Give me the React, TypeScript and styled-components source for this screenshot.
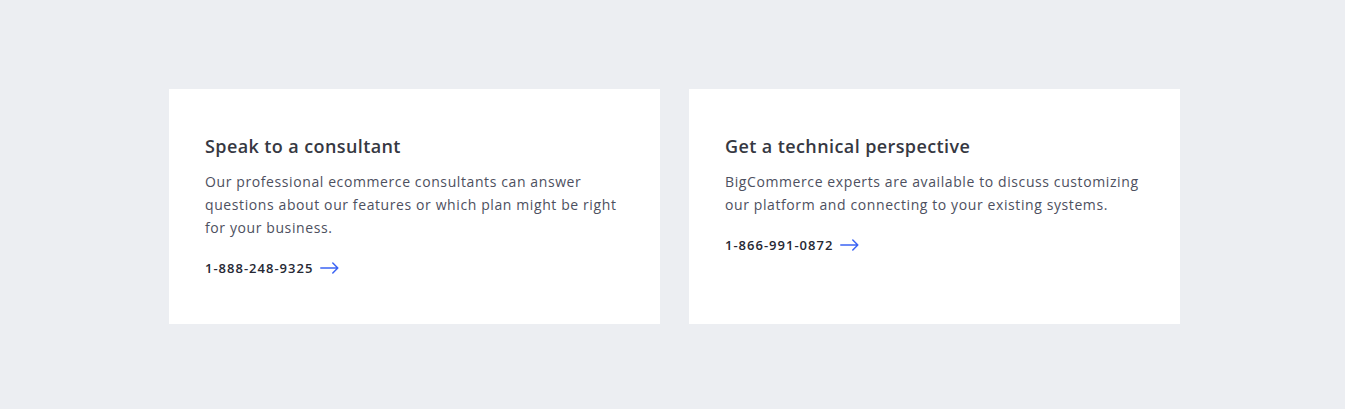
import React from "react";
import styled, { createGlobalStyle } from "styled-components";

const Global = createGlobalStyle`
  html, body { margin: 0; padding: 0; background: #eceef2; }
  body { font-family: "Open Sans", "Liberation Sans", sans-serif; }
`;

const Page = styled.div`
  width: 1345px;
  height: 409px;
  box-sizing: border-box;
  padding: 89px 0 0 169px;
  display: grid;
  grid-template-columns: 491px 491px;
  column-gap: 29px;
  align-items: start;
  background: #eceef2;
`;

const Card = styled.section`
  background: #ffffff;
  height: 235px;
  box-sizing: border-box;
  padding: 45px 36px 0 36px;
  display: flex;
  flex-direction: column;
`;

const Title = styled.h2`
  margin: 0;
  font-size: 18px;
  line-height: 24px;
  font-weight: 600;
  color: #363842;
  letter-spacing: 0.4px;
`;

const Body = styled.p`
  margin: 12px 0 0 0;
  font-size: 14px;
  line-height: 23px;
  font-weight: 400;
  color: #4d5060;
  letter-spacing: 0.6px;
`;

const Phone = styled.a`
  margin-top: 19px;
  display: inline-flex;
  align-items: center;
  gap: 7px;
  font-size: 13px;
  line-height: 20px;
  font-weight: 600;
  color: #262834;
  text-decoration: none;
  letter-spacing: 1px;
  align-self: flex-start;
`;

const Arrow = () => (
  <svg width="19" height="12" viewBox="0 0 19 12" fill="none">
    <path d="M0.8 6H17.8M12.8 1L17.8 6L12.8 11" stroke="#3c64f4" strokeWidth="1.5" strokeLinecap="round" strokeLinejoin="round" />
  </svg>
);

const cards = [
  {
    title: "Speak to a consultant",
    body: "Our professional ecommerce consultants can answer questions about our features or which plan might be right for your business.",
    phone: "1-888-248-9325",
  },
  {
    title: "Get a technical perspective",
    body: "BigCommerce experts are available to discuss customizing our platform and connecting to your existing systems.",
    phone: "1-866-991-0872",
  },
];

export default function App() {
  return (
    <>
      <Global />
      <Page>
        {cards.map((c) => (
          <Card key={c.phone}>
            <Title>{c.title}</Title>
            <Body>{c.body}</Body>
            <Phone href="#">
              {c.phone}
              <Arrow />
            </Phone>
          </Card>
        ))}
      </Page>
    </>
  );
}
